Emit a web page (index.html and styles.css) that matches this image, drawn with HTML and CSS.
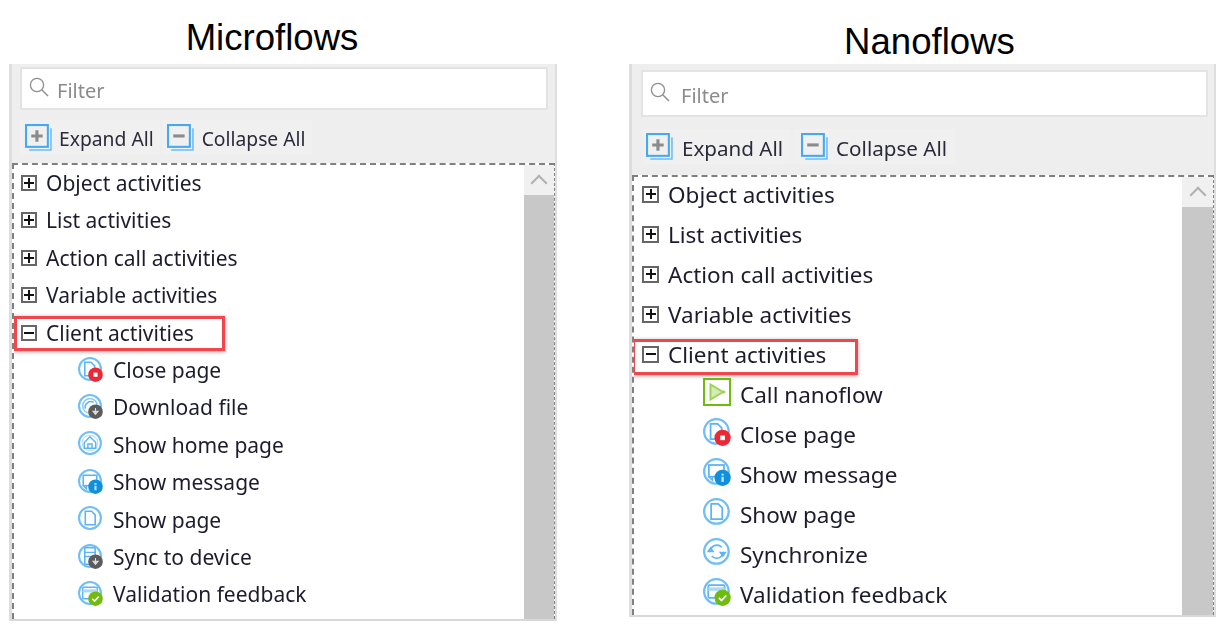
FILE: index.html
```html
<!DOCTYPE html>
<html lang="en">
<head>
    <meta charset="UTF-8">
    <meta name="viewport" content="width=device-width, initial-scale=1.0">
    <title>Microflows and Nanoflows</title>
    <link rel="stylesheet" href="styles.css">
</head>
<body>
    <!-- Shared icons -->
    <svg class="iconDefs" aria-hidden="true">
        <symbol id="i-search" viewBox="0 0 20 20">
            <circle cx="8" cy="8" r="6.6" fill="none" stroke="#8f8f8f" stroke-width="1.3"/>
            <path d="M13 13l6 6" stroke="#8f8f8f" stroke-width="1.5"/>
        </symbol>
        <symbol id="i-expand" viewBox="0 0 26 26">
            <path d="M4 25h21V4" fill="none" stroke="#6dbcf5" stroke-width="1.5"/>
            <rect x="1" y="1" width="21" height="21" fill="#f0f0f0" stroke="#45a9f2" stroke-width="2"/>
            <path d="M11.5 6v11M6 11.5h11" stroke="#8b8b8b" stroke-width="3"/>
        </symbol>
        <symbol id="i-collapse" viewBox="0 0 26 26">
            <path d="M4 25h21V4" fill="none" stroke="#6dbcf5" stroke-width="1.5"/>
            <rect x="1" y="1" width="21" height="21" fill="#f0f0f0" stroke="#45a9f2" stroke-width="2"/>
            <path d="M6 11.5h11" stroke="#8b8b8b" stroke-width="3"/>
        </symbol>
        <symbol id="i-ring" viewBox="0 0 24 24">
            <circle cx="11.5" cy="11.5" r="10.5" fill="#fff" stroke="#6fbef8" stroke-width="2"/>
        </symbol>
        <symbol id="i-close" viewBox="0 0 24 24">
            <use href="#i-ring"/>
            <path d="M6.5 5h6l3.5 3.5V18H6.5z" fill="none" stroke="#5cb4f4" stroke-width="1.5"/>
            <circle cx="16.8" cy="17" r="7" fill="#ee2737"/>
            <rect x="14.8" y="15" width="4" height="4" fill="#fff"/>
        </symbol>
        <symbol id="i-download" viewBox="0 0 24 24">
            <use href="#i-ring"/>
            <circle cx="11.5" cy="11.5" r="7" fill="none" stroke="#7cc4f8" stroke-width="1.3"/>
            <path d="M7 14a5.5 5.5 0 0 1 8-6" fill="none" stroke="#5cb4f4" stroke-width="1.5"/>
            <circle cx="16.8" cy="17" r="7" fill="#5c5c5c"/>
            <path d="M16.8 13.5v4M14.3 16.5l2.5 3 2.5-3z" stroke="#ddd" fill="#ddd"/>
        </symbol>
        <symbol id="i-home" viewBox="0 0 24 24">
            <use href="#i-ring"/>
            <circle cx="11.5" cy="11.5" r="7.5" fill="none" stroke="#b7defb" stroke-width="1"/>
            <path d="M11.5 5.5L17 11v5.5H6V11zM9.5 16.5v-4h4v4" fill="none" stroke="#5cb4f4" stroke-width="1.4"/>
        </symbol>
        <symbol id="i-message" viewBox="0 0 24 24">
            <use href="#i-ring"/>
            <rect x="5" y="6" width="13" height="10" fill="none" stroke="#5cb4f4" stroke-width="1.5"/>
            <path d="M5 16l3 3v-3" fill="none" stroke="#5cb4f4" stroke-width="1.3"/>
            <circle cx="16.8" cy="17" r="7" fill="#0f8fdc"/>
            <path d="M16.8 13.5V15M16.8 16V20.5" stroke="#bfe3fa" stroke-width="2"/>
        </symbol>
        <symbol id="i-page" viewBox="0 0 24 24">
            <use href="#i-ring"/>
            <path d="M7 5h6l3.5 3.5V18H7z" fill="none" stroke="#5cb4f4" stroke-width="1.5"/>
        </symbol>
        <symbol id="i-device" viewBox="0 0 24 24">
            <use href="#i-ring"/>
            <rect x="6.5" y="3.5" width="10" height="16" rx="1" fill="none" stroke="#5cb4f4" stroke-width="1.5"/>
            <path d="M6.5 8h10M6.5 12h10" stroke="#5cb4f4" stroke-width="1.3"/>
            <circle cx="16.8" cy="17" r="7" fill="#5c5c5c"/>
            <path d="M16.8 13.5v4M14.3 16.5l2.5 3 2.5-3z" stroke="#ddd" fill="#ddd"/>
        </symbol>
        <symbol id="i-valid" viewBox="0 0 24 24">
            <use href="#i-ring"/>
            <rect x="4.5" y="6" width="14" height="11" rx="1" fill="none" stroke="#5cb4f4" stroke-width="1.5"/>
            <path d="M4.5 9.5h14" stroke="#a9d8fa" stroke-width="3"/>
            <circle cx="16.8" cy="17" r="7" fill="#6fbb0e"/>
            <path d="M13.6 17l2.3 2.3 4-4.3" fill="none" stroke="#fff" stroke-width="1.5"/>
        </symbol>
        <symbol id="i-sync" viewBox="0 0 24 24">
            <use href="#i-ring"/>
            <path d="M6.5 10.5a5.500 5.500 0 0 1 9.500-2.500M8.500 11.500h-4l2-3zM17 13a5.500 5.500 0 0 1-9.500 2.500M15 12.500h4l-2 3z" fill="none" stroke="#5cb4f4" stroke-width="1.4"/>
        </symbol>
        <symbol id="i-nanoflow" viewBox="0 0 28 28">
            <rect x="1" y="1" width="26" height="26" fill="#fff" stroke="#6cbc0c" stroke-width="2"/>
            <path d="M7.5 6.5v15L20 14z" fill="#d5ebb4" stroke="#9dd35c" stroke-width="2"/>
            <path d="M20 12v4l3-2z" fill="#9dd35c"/>
        </symbol>
    </svg>

    <section class="flowColumn microColumn">
        <h1 class="flowTitle">Microflows</h1>
        <div class="panel">
            <div class="filterBox">
                <svg class="filterIcon"><use href="#i-search"/></svg>
                <span>Filter</span>
            </div>
            <div class="toolbar">
                <div class="toolButton expandButton"><svg class="toolIcon"><use href="#i-expand"/></svg>Expand All</div>
                <div class="toolButton collapseButton"><svg class="toolIcon"><use href="#i-collapse"/></svg>Collapse All</div>
            </div>
            <div class="tree">
                <ul class="treeList">
                    <li class="row"><span class="toggle plus"></span>Object activities</li>
                    <li class="row"><span class="toggle plus"></span>List activities</li>
                    <li class="row"><span class="toggle plus"></span>Action call activities</li>
                    <li class="row"><span class="toggle plus"></span>Variable activities</li>
                    <li class="row marked"><span class="toggle"></span>Client activities</li>
                    <li class="row child"><svg class="rowIcon"><use href="#i-close"/></svg>Close page</li>
                    <li class="row child"><svg class="rowIcon"><use href="#i-download"/></svg>Download file</li>
                    <li class="row child"><svg class="rowIcon"><use href="#i-home"/></svg>Show home page</li>
                    <li class="row child"><svg class="rowIcon"><use href="#i-message"/></svg>Show message</li>
                    <li class="row child"><svg class="rowIcon"><use href="#i-page"/></svg>Show page</li>
                    <li class="row child"><svg class="rowIcon"><use href="#i-device"/></svg>Sync to device</li>
                    <li class="row child"><svg class="rowIcon"><use href="#i-valid"/></svg>Validation feedback</li>
                </ul>
                <div class="scrollbar">
                    <div class="scrollUp"></div>
                    <div class="scrollThumb"></div>
                </div>
            </div>
        </div>
    </section>

    <section class="flowColumn nanoColumn">
        <h1 class="flowTitle">Nanoflows</h1>
        <div class="panel">
            <div class="filterBox">
                <svg class="filterIcon"><use href="#i-search"/></svg>
                <span>Filter</span>
            </div>
            <div class="toolbar">
                <div class="toolButton expandButton"><svg class="toolIcon"><use href="#i-expand"/></svg>Expand All</div>
                <div class="toolButton collapseButton"><svg class="toolIcon"><use href="#i-collapse"/></svg>Collapse All</div>
            </div>
            <div class="tree">
                <ul class="treeList">
                    <li class="row"><span class="toggle plus"></span>Object activities</li>
                    <li class="row"><span class="toggle plus"></span>List activities</li>
                    <li class="row"><span class="toggle plus"></span>Action call activities</li>
                    <li class="row"><span class="toggle plus"></span>Variable activities</li>
                    <li class="row marked"><span class="toggle"></span>Client activities</li>
                    <li class="row child"><svg class="rowIcon"><use href="#i-nanoflow"/></svg>Call nanoflow</li>
                    <li class="row child"><svg class="rowIcon"><use href="#i-close"/></svg>Close page</li>
                    <li class="row child"><svg class="rowIcon"><use href="#i-message"/></svg>Show message</li>
                    <li class="row child"><svg class="rowIcon"><use href="#i-page"/></svg>Show page</li>
                    <li class="row child"><svg class="rowIcon"><use href="#i-sync"/></svg>Synchronize</li>
                    <li class="row child"><svg class="rowIcon"><use href="#i-valid"/></svg>Validation feedback</li>
                </ul>
                <div class="scrollbar">
                    <div class="scrollUp"></div>
                    <div class="scrollThumb"></div>
                </div>
            </div>
        </div>
    </section>
</body>
</html>
```

FILE: styles.css
```css
/* Page holds the two panels side by side */
body {
    margin: 0;
    height: 626px;
    overflow: hidden;
    display: flex;
    padding-left: 9px;
    box-sizing: border-box;
    background-color: #fff;
    font-family: "Noto Sans", sans-serif;
    color: #1c1c2c;
}

.iconDefs {
    display: none;
}

.flowColumn {
    display: flex;
    flex-direction: column;
}

/* Each screenshot has its own scale, so sizes differ per column */
.microColumn {
    width: 548px;
    height: 621px;
    margin-right: 72px;
    --row: 37.4px;
    --text: 21px;
    --tool: 19.3px;
    --toggle: 16px;
    --icon: 25px;
}

.nanoColumn {
    width: 587px;
    height: 617px;
    --row: 40px;
    --text: 22.5px;
    --tool: 20.6px;
    --toggle: 17px;
    --icon: 28px;
}

.flowTitle {
    margin: 0;
    height: 64px;
    font-family: "Liberation Sans", sans-serif;
    font-size: 36.6px;
    font-weight: normal;
    line-height: 76px;
    color: #000;
    text-align: center;
}

.microColumn .flowTitle {
    padding-right: 22px;
}

.nanoColumn .flowTitle {
    line-height: 84px;
    padding-left: 14px;
}

.panel {
    flex: 1;
    min-height: 0;
    display: flex;
    flex-direction: column;
    background-color: #eeeeee;
    border-left: 3px solid #dedede;
    border-bottom: 2px solid #d8d8d8;
    border-right: 2px solid #dedede;
    filter: blur(0.35px);
}

.filterBox {
    display: flex;
    align-items: center;
    background-color: #fff;
    border: 2px solid #e3e3e3;
    color: #8b8b8b;
    font-size: 20px;
}

.microColumn .filterBox {
    height: 43px;
    margin: 3px 7px 0 8px;
    box-sizing: border-box;
    padding: 3px 0 0 7px;
    gap: 8px;
}

.nanoColumn .filterBox {
    height: 47px;
    margin: 6px 6px 0 9px;
    box-sizing: border-box;
    padding: 3px 0 0 7px;
    gap: 11px;
}

.filterIcon {
    width: 20px;
    height: 20px;
    margin-top: -7px;
}

.toolbar {
    display: flex;
    gap: 2px;
    font-size: var(--tool);
    color: #2a2a3a;
}

.microColumn .toolbar {
    height: 53px;
    padding: 10px 0 0 8px;
    box-sizing: border-box;
}

.nanoColumn .toolbar {
    height: 58px;
    padding: 12px 0 0 11px;
    box-sizing: border-box;
}

.toolButton {
    display: flex;
    align-items: center;
    height: 35px;
    padding: 2px 6px 0 5px;
    box-sizing: border-box;
    gap: 7px;
    background-color: #f0f0f0;
}

.collapseButton {
    gap: 8px;
}

.nanoColumn .toolButton {
    padding: 2px 8px 0 3px;
    gap: 9px;
}

.nanoColumn .collapseButton {
    padding-left: 8px;
    gap: 8px;
}

.toolIcon {
    width: 27px;
    height: 27px;
    margin-top: -2px;
}

.tree {
    flex: 1;
    min-height: 0;
    display: flex;
    overflow: hidden;
    background-color: #fff;
    border-top: 2px dashed #808080;
    border-left: 2px dashed #808080;
    border-right: 1px dashed #808080;
}

.treeList {
    flex: 1;
    margin: 0;
    padding: 0;
    list-style: none;
    font-size: var(--text);
}

.microColumn .treeList {
    margin-top: -0.6px;
    padding-left: 7px;
}

.nanoColumn .treeList {
    margin-top: -3px;
    padding-left: 8px;
}

.row {
    position: relative;
    display: flex;
    align-items: center;
    height: var(--row);
    white-space: nowrap;
}

.child {
    padding-left: 57px;
    gap: 10px;
}

.nanoColumn .child {
    padding-left: 61px;
    gap: 9px;
}

/* Tree toggle, plus adds the vertical bar */
.toggle {
    position: relative;
    flex: none;
    width: var(--toggle);
    height: var(--toggle);
    box-sizing: border-box;
    margin-right: 9px;
    border: 2px solid #666;
    background: linear-gradient(#111, #111) center / 10px 2px no-repeat;
}

.toggle.plus {
    background:
        linear-gradient(#111, #111) center / 10px 2px no-repeat,
        linear-gradient(#111, #111) center / 2px 10px no-repeat;
}

.rowIcon {
    flex: none;
    width: var(--icon);
    height: var(--icon);
    margin-top: -2px;
}

.nanoColumn .rowIcon {
    margin-top: -4px;
}

/* Red annotation around the Client activities row */
.marked::after {
    content: "";
    position: absolute;
    border: 3px solid #f0464c;
    box-shadow: 0 1px 4px rgba(0, 0, 0, 0.35);
}

.microColumn .marked::after {
    top: 2px;
    bottom: 0;
    left: -7px;
    width: 205px;
}

.nanoColumn .marked::after {
    top: 5px;
    bottom: -1px;
    left: -10px;
    width: 220px;
}

.scrollbar {
    flex: none;
    display: flex;
    flex-direction: column;
}

.microColumn .scrollbar {
    width: 30px;
}

.nanoColumn .scrollbar {
    width: 31px;
}

.scrollUp {
    position: relative;
    flex: none;
    height: 30px;
    background-color: #f0f0f0;
}

/* Chevron drawn from a rotated box */
.scrollUp::before {
    content: "";
    position: absolute;
    top: 12px;
    left: 50%;
    width: 10px;
    height: 10px;
    margin-left: -6px;
    border-top: 2px solid #b0b0b0;
    border-left: 2px solid #b0b0b0;
    transform: rotate(45deg);
}

.scrollThumb {
    flex: 1;
    background-color: #c8c8c8;
}
```
